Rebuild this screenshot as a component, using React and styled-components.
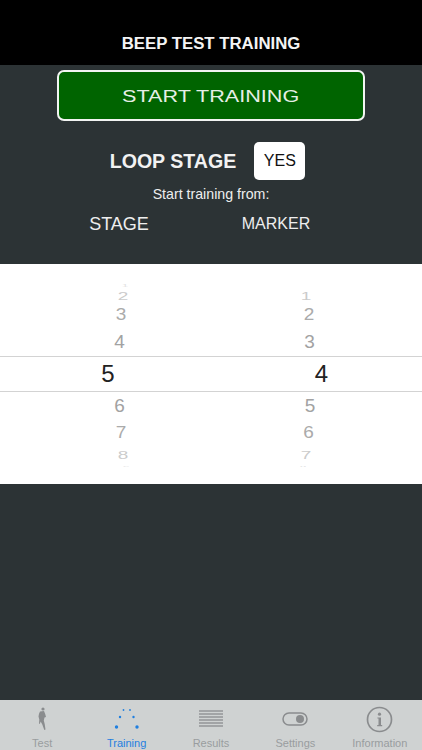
import React from 'react';
import styled, { createGlobalStyle } from 'styled-components';

const Global = createGlobalStyle`
  html, body { margin: 0; padding: 0; width: 422px; height: 750px; overflow: hidden; background: #2d3436; }
  body { font-family: "Liberation Sans", Arial, sans-serif; }
`;
const Screen = styled.div`
  width: 422px; height: 750px; display: flex; flex-direction: column; background: #2c3335; color: #fff; overflow: hidden;
`;
const Header = styled.header`
  height: 65px; flex: none; box-sizing: border-box; padding-top: 22px; background: #000;
  display: flex; align-items: center; justify-content: center;
  font-size: 16.8px; font-weight: 700; color: #f4f4f4;
`;
const Controls = styled.section`
  height: 199px; flex: none; box-sizing: border-box; padding-top: 5px;
  display: flex; flex-direction: column; align-items: center;
`;
const StartButton = styled.button`
  width: 308px; height: 51px; box-sizing: border-box; border: 2px solid #f2f4f2; border-radius: 7px;
  background: #006400; color: #e6efe6; padding: 2px 0 0; font: 400 16px "Liberation Sans", Arial, sans-serif;
  display: flex; align-items: center; justify-content: center;
`;
const WideLabel = styled.span`
  display: inline-block; transform: scaleX(1.35); white-space: nowrap;
`;
const LoopRow = styled.div`
  margin-top: 21px; height: 38px; display: flex; align-items: center; gap: 18px; margin-right: 7px;
`;
const LoopLabel = styled.span`
  font-size: 19.6px; font-weight: 700; color: #f2f2f2;
`;
const YesButton = styled.button`
  width: 51px; height: 38px; border: 0; border-radius: 5px; background: #fff; color: #111; padding: 0;
  font: 400 16px "Liberation Sans", Arial, sans-serif;
`;
const FromText = styled.div`
  margin-top: 5px; font-size: 14.2px; line-height: 18px; color: #eee;
`;
const ColumnTitles = styled.div`
  width: 100%; margin-top: 9px; height: 24px; display: flex; align-items: center; color: #eee;
`;
const ColumnTitle = styled.span`
  font-size: ${p => p.$size}px; text-align: center; width: ${p => p.$width}px; margin-left: ${p => p.$left}px;
`;
const Picker = styled.section`
  height: 220px; flex: none; box-sizing: border-box; background: #fff; padding-top: 16px; color: #a2a2a2;
`;
const WheelRow = styled.div`
  height: ${p => p.$h}px; display: grid; grid-template-columns: 211px 211px; align-items: center;
`;
const SelectedRow = styled(WheelRow)`
  box-sizing: border-box; border-top: 1px solid #d3d3d3; border-bottom: 1px solid #d3d3d3; color: #222;
`;
const Cell = styled.span`
  display: block; width: ${p => p.$w}px; justify-self: ${p => p.$side}; text-align: center;
  font-size: ${p => p.$size || 19}px; line-height: 1;
  opacity: ${p => p.$o ?? 1};
  transform: scaleY(${p => p.$sy ?? 1});
`;
const Spacer = styled.div`
  flex: 1; min-height: 0;
`;
const TabBar = styled.nav`
  height: 50px; flex: none; background: #cfd2d2; display: grid; grid-template-columns: repeat(5, 1fr);
`;
const Tab = styled.div`
  display: flex; flex-direction: column; align-items: center; color: ${p => (p.$active ? '#1f7fe0' : '#999d9f')};
`;
const IconSlot = styled.div`
  height: 36px; width: 100%; display: flex; align-items: center; justify-content: center; margin-top: 1px;
  svg { display: block; }
`;
const TabLabel = styled.span`
  font-size: 11px; line-height: 13px; white-space: nowrap;
`;

const rows = {
  top: [
    { h: 6, a: '1', b: '', ca: 125, cb: 304, size: 12, sy: .22, o: .3 },
    { h: 15, a: '2', b: '1', ca: 123, cb: 306, sy: .62, o: .55 },
    { h: 26, a: '3', b: '2', ca: 121, cb: 309, sy: .9, o: .9 },
    { h: 29, a: '4', b: '3', ca: 119.5, cb: 309.5, sy: 1, o: 1 },
  ],
  bottom: [
    { h: 27, a: '6', b: '5', ca: 119.5, cb: 310, sy: 1, o: 1 },
    { h: 27, a: '7', b: '6', ca: 121, cb: 308.5, sy: .85, o: .9 },
    { h: 14, a: '8', b: '7', ca: 123, cb: 306, sy: .55, o: .55 },
    { h: 4, a: '9', b: '8', ca: 126, cb: 303, size: 12, sy: .2, o: .3 },
  ],
};

const renderRow = (r, i) => (
  <WheelRow key={i} $h={r.h}>
    <Cell $side="start" $w={2 * r.ca} $sy={r.sy} $o={r.o} $size={r.size}>{r.a}</Cell>
    <Cell $side="end" $w={2 * (422 - r.cb)} $sy={r.sy} $o={r.o} $size={r.size}>{r.b}</Cell>
  </WheelRow>
);

const Runner = () => (
  <svg width="24" height="26" viewBox="0 0 24 26" fill="#8a8c8e">
    <circle cx="13" cy="3" r="1.6" />
    <path d="M10 5.5l4-.5 1.2 3 .8 3-1.5 .6-.7 3 .9 3.4 .8 5.4-1.2.5-2-5.4-1.6-3-.9 2.4-.8-.3.3-4-.8-3.2.5-2.6z" />
  </svg>
);
const Dots = () => (
  <svg width="30" height="26" viewBox="0 0 30 26" fill="#1f7fe0">
    <circle cx="11.5" cy="4" r=".9" /><circle cx="18" cy="4" r=".9" />
    <circle cx="8" cy="11" r="1.2" /><circle cx="21.5" cy="11" r="1.2" />
    <circle cx="4.5" cy="21" r="1.7" /><circle cx="25" cy="21" r="1.7" />
  </svg>
);
const Lines = () => (
  <svg width="24" height="18" viewBox="0 0 24 18" stroke="#8a8c8e" strokeWidth="1.3">
    {[1, 4, 7, 10, 13, 16].map(y => <line key={y} x1="0" x2="24" y1={y} y2={y} />)}
  </svg>
);
const Toggle = () => (
  <svg width="26" height="14" viewBox="0 0 26 14">
    <rect x="1" y="1" width="24" height="12" rx="6" fill="none" stroke="#8a8c8e" strokeWidth="1.5" />
    <circle cx="18" cy="7" r="4" fill="#8a8c8e" />
  </svg>
);
const Info = () => (
  <svg width="27" height="27" viewBox="0 0 27 27">
    <circle cx="13.5" cy="13.5" r="12" fill="none" stroke="#8a8c8e" strokeWidth="1.7" />
    <circle cx="13.5" cy="8.2" r="1.6" fill="#8a8c8e" />
    <path d="M11.4 11.4h3.6v7.6h1.2v1.2h-5v-1.2h1.3v-6.4h-1.1z" fill="#8a8c8e" />
  </svg>
);

const tabs = [
  ['Test', Runner], ['Training', Dots, true], ['Results', Lines], ['Settings', Toggle], ['Information', Info],
];

export default function App() {
  return (
    <Screen>
      <Global />
      <Header>BEEP TEST TRAINING</Header>
      <Controls>
        <StartButton><WideLabel>START TRAINING</WideLabel></StartButton>
        <LoopRow>
          <LoopLabel>LOOP STAGE</LoopLabel>
          <YesButton>YES</YesButton>
        </LoopRow>
        <FromText>Start training from:</FromText>
        <ColumnTitles>
          <ColumnTitle $size={18} $width={80} $left={79}>STAGE</ColumnTitle>
          <ColumnTitle $size={16} $width={90} $left={72}>MARKER</ColumnTitle>
        </ColumnTitles>
      </Controls>
      <Picker>
        {rows.top.map(renderRow)}
        <SelectedRow $h={36}>
          <Cell $side="start" $w={216} $size={24}>5</Cell>
          <Cell $side="end" $w={201} $size={24}>4</Cell>
        </SelectedRow>
        {rows.bottom.map(renderRow)}
      </Picker>
      <Spacer />
      <TabBar>
        {tabs.map(([label, Icon, active]) => (
          <Tab key={label} $active={active}>
            <IconSlot><Icon /></IconSlot>
            <TabLabel>{label}</TabLabel>
          </Tab>
        ))}
      </TabBar>
    </Screen>
  );
}
